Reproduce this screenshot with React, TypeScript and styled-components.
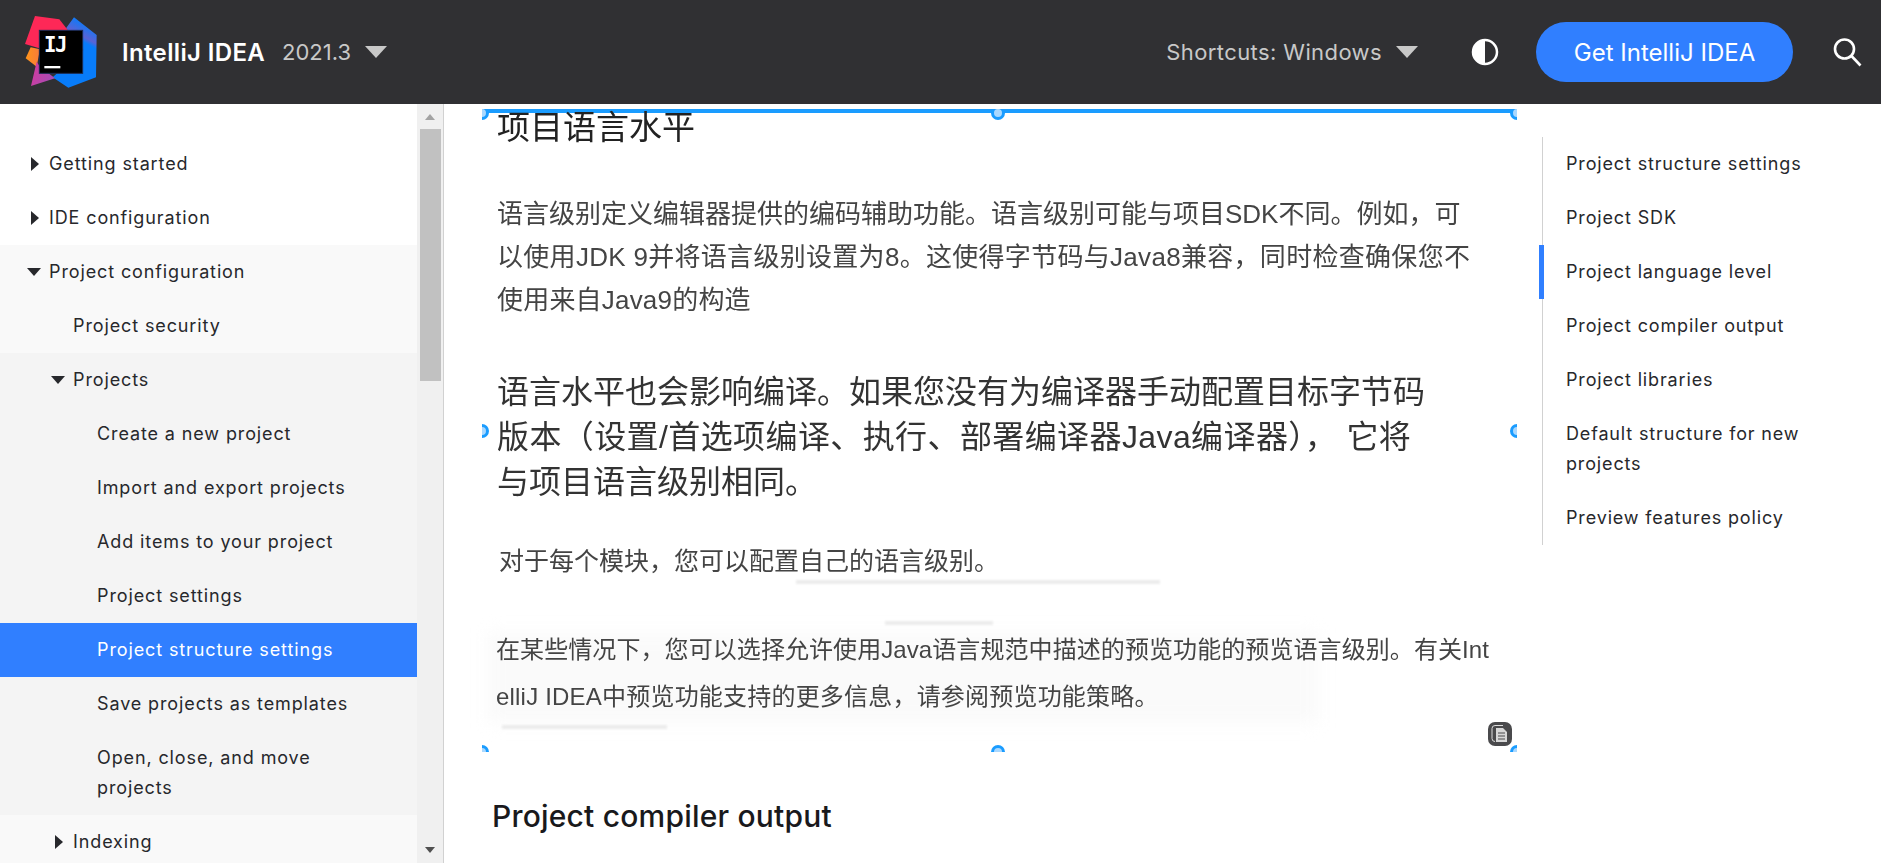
import styled, { createGlobalStyle } from 'styled-components'

const GlobalStyle = createGlobalStyle`
  html, body {
    margin: 0;
    height: 100%;
    overflow: hidden;
    background: #fff;
  }
  * { box-sizing: border-box; }
`

const sansStack = `Inter, "Noto Sans", sans-serif`
const cjkStack = `"Liberation Sans", "Noto Sans CJK SC", sans-serif`

const Page = styled.div`
  height: 100vh;
  display: flex;
  flex-direction: column;
  font-family: ${sansStack};
  color: #27282c;
`

const Header = styled.header`
  flex: 0 0 104px;
  display: flex;
  align-items: center;
  padding: 0 19px 0 24px;
  background: #303033;
`

const Brand = styled.span`
  margin-left: 24px;
  font-size: 24px;
  font-weight: 600;
  letter-spacing: 0.35px;
  color: #fff;
`

const Version = styled.span`
  margin-left: 17px;
  font-size: 22px;
  color: #c8c8c8;
`

const HeaderCaret = styled.span<{ $gap: number }>`
  margin-left: ${({ $gap }) => $gap}px;
  width: 0;
  height: 0;
  border-left: 11px solid transparent;
  border-right: 11px solid transparent;
  border-top: 12px solid #c8c8c8;
`

const Spacer = styled.div`
  flex: 1;
`

const Shortcuts = styled.span`
  font-size: 22px;
  letter-spacing: 0.4px;
  color: #c8c8c8;
`

const ContrastIcon = styled.svg`
  margin-left: 53px;
  width: 28px;
  height: 28px;
`

const GetButton = styled.button`
  margin-left: 37px;
  width: 257px;
  height: 60px;
  border: 0;
  border-radius: 30px;
  background: #307fff;
  color: #fff;
  font-family: inherit;
  font-size: 24px;
`

const SearchIcon = styled.svg`
  margin-left: 39px;
  width: 30px;
  height: 30px;
`

const Body = styled.div`
  flex: 1;
  min-height: 0;
  display: flex;
`

const Sidebar = styled.aside`
  flex: 0 0 444px;
  display: flex;
  border-right: 1px solid #d1d1d1;
`

const Nav = styled.nav`
  flex: 1;
  padding-top: 33px;
  overflow: hidden;
`

const Group = styled.div<{ $bg: string }>`
  background: ${({ $bg }) => $bg};
`

const Row = styled.div<{ $depth: number; $active?: boolean }>`
  display: flex;
  padding: 12px 40px 12px ${({ $depth }) => 49 + $depth * 24}px;
  font-size: 18px;
  line-height: 30px;
  letter-spacing: 0.88px;
  background: ${({ $active }) => ($active ? '#307fff' : 'transparent')};
  color: ${({ $active }) => ($active ? '#fff' : '#27282c')};
`

const CaretBox = styled.span`
  flex: 0 0 22px;
  margin-left: -22px;
  display: flex;
  align-items: center;
`

const Caret = styled.span<{ $open?: boolean }>`
  width: 0;
  height: 0;
  ${({ $open }) =>
    $open
      ? `
    border-left: 7px solid transparent;
    border-right: 7px solid transparent;
    border-top: 8px solid #27282c;
  `
      : `
    margin-left: 4px;
    border-top: 7px solid transparent;
    border-bottom: 7px solid transparent;
    border-left: 8px solid #27282c;
  `}
`

const ScrollTrack = styled.div`
  flex: 0 0 26px;
  display: flex;
  flex-direction: column;
  align-items: center;
  background: #f0f0f0;
`

const ScrollArrowUp = styled.span`
  margin-top: 10px;
  width: 0;
  height: 0;
  border-left: 5.5px solid transparent;
  border-right: 5.5px solid transparent;
  border-bottom: 6px solid #a3a3a3;
`

const ScrollThumb = styled.div`
  margin-top: 9px;
  width: 21px;
  height: 252px;
  background: #c1c1c1;
`

const ScrollArrowDown = styled.span`
  margin-top: auto;
  margin-bottom: 10px;
  width: 0;
  height: 0;
  border-left: 5.5px solid transparent;
  border-right: 5.5px solid transparent;
  border-top: 6px solid #505050;
`

const Main = styled.main`
  flex: 1;
  min-width: 0;
  padding: 5px 0 0 38px;
  overflow: hidden;
`

const PastedBlock = styled.section`
  position: relative;
  width: 1035px;
  height: 643px;
  padding-left: 15px;
  border-top: 4px solid #1a9cff;
  font-family: ${cjkStack};
`

const HandleLayer = styled.div`
  position: absolute;
  inset: -4px 0 0 0;
  overflow: hidden;
  pointer-events: none;
`

const BlockTitle = styled.h3`
  margin: 0;
  font-size: 33px;
  font-weight: 400;
  line-height: 30px;
  color: #222;
  filter: blur(0.4px);
`

const BlockText = styled.div<{ $size: number; $line: number; $top: number; $shift?: number; $color: string }>`
  margin: ${({ $top }) => $top}px 0 0 ${({ $shift }) => $shift ?? 0}px;
  font-size: ${({ $size }) => $size}px;
  line-height: ${({ $line }) => $line}px;
  color: ${({ $color }) => $color};
  white-space: nowrap;
  filter: blur(0.5px);
`

const BlockLine = styled.div<{ $track?: number }>`
  letter-spacing: ${({ $track }) => $track ?? 0}px;
`

const PictureShade = styled.div`
  position: absolute;
  left: 6px;
  top: 520px;
  width: 830px;
  height: 90px;
  background: #fafafa;
  filter: blur(8px);
`

const Handle = styled.span<{ $x: string; $y: string }>`
  position: absolute;
  left: ${({ $x }) => $x};
  top: ${({ $y }) => $y};
  width: 14px;
  height: 14px;
  margin: -7px 0 0 -7px;
  border: 3px solid #1a9cff;
  border-radius: 50%;
  background: #a9d8ff;
`

const Smudge = styled.span<{ $x: number; $y: number; $w: number }>`
  position: absolute;
  left: ${({ $x }) => $x}px;
  top: ${({ $y }) => $y}px;
  width: ${({ $w }) => $w}px;
  height: 4px;
  background: #ececec;
  filter: blur(1px);
`

const CopyBadge = styled.svg`
  position: absolute;
  left: 1006px;
  top: 609px;
  width: 24px;
  height: 24px;
`

const SectionTitle = styled.h2`
  margin: 46px 0 0 10px;
  font-size: 30px;
  font-weight: 500;
  line-height: 36px;
  letter-spacing: 0.2px;
  color: #19191c;
`

const Toc = styled.aside`
  flex: 0 0 342px;
  padding-top: 33px;
`

const TocList = styled.div`
  margin-left: 3px;
  border-left: 1px solid #d1d1d1;
`

const TocItem = styled.div<{ $active?: boolean }>`
  margin-left: -4px;
  padding: 12px 40px 12px 22px;
  border-left: 5px solid ${({ $active }) => ($active ? '#307fff' : 'transparent')};
  font-size: 18px;
  line-height: 30px;
  letter-spacing: 0.85px;
  color: #27282c;
`

const Logo = () => (
  <svg width="74" height="74" viewBox="72 45 222 222">
    <defs>
      <linearGradient id="logoOrange" x1="0" y1="0" x2="1" y2="0">
        <stop offset="0" stopColor="#ff9419" />
        <stop offset="1" stopColor="#f97a3c" />
      </linearGradient>
      <linearGradient id="logoMagenta" x1="0" y1="0" x2="1" y2="0.4">
        <stop offset="0" stopColor="#d6399a" />
        <stop offset="1" stopColor="#a84bb5" />
      </linearGradient>
      <linearGradient id="logoBlue" x1="0.7" y1="0.05" x2="0.55" y2="0.5">
        <stop offset="0" stopColor="#087cfa" />
        <stop offset="0.45" stopColor="#5a63d6" />
        <stop offset="0.6" stopColor="#087cfa" />
      </linearGradient>
    </defs>
    <polygon points="92,142 77,175 110,200 120,148" fill="url(#logoOrange)" />
    <polygon points="222,52 290,105 288,232 205,263 158,232 250,150 198,85" fill="url(#logoBlue)" />
    <polygon points="110,185 93,258 165,235 120,200" fill="url(#logoMagenta)" />
    <polygon points="105,48 178,58 205,92 118,145 75,132" fill="#fe2857" />
    <rect x="118" y="91" width="130" height="129" fill="#000" stroke="#1b2a52" strokeWidth="3" />
    <text x="132" y="155" fontFamily="DejaVu Sans Mono, monospace" fontWeight="700" fontSize="62" fill="#fff" textLength="70">
      IJ
    </text>
    <rect x="133" y="198" width="48" height="7" fill="#fff" />
  </svg>
)

const navTop = ['Getting started', 'IDE configuration']

const projectChildren = [
  'Create a new project',
  'Import and export projects',
  'Add items to your project',
  'Project settings',
]

const tocItems = [
  'Project structure settings',
  'Project SDK',
  'Project language level',
  'Project compiler output',
  'Project libraries',
  'Default structure for new projects',
  'Preview features policy',
]

const App = () => {
  return (
    <Page>
      <GlobalStyle />
      <Header>
        <Logo />
        <Brand>IntelliJ IDEA</Brand>
        <Version>2021.3</Version>
        <HeaderCaret $gap={14} />
        <Spacer />
        <Shortcuts>Shortcuts: Windows</Shortcuts>
        <HeaderCaret $gap={14} />
        <ContrastIcon viewBox="0 0 28 28">
          <circle cx="14" cy="14" r="12" fill="#303033" stroke="#fff" strokeWidth="2.5" />
          <path d="M14 2a12 12 0 0 0 0 24z" fill="#fff" />
        </ContrastIcon>
        <GetButton>Get IntelliJ IDEA</GetButton>
        <SearchIcon viewBox="0 0 30 30" fill="none" stroke="#fff" strokeWidth="2.6">
          <circle cx="12.5" cy="12" r="9.5" />
          <path d="M19.5 19l9 9.5" />
        </SearchIcon>
      </Header>
      <Body>
        <Sidebar>
          <Nav>
            {navTop.map((label) => (
              <Row key={label} $depth={0}>
                <CaretBox>
                  <Caret />
                </CaretBox>
                {label}
              </Row>
            ))}
            <Group $bg="#f9f9f9">
              <Row $depth={0}>
                <CaretBox>
                  <Caret $open />
                </CaretBox>
                Project configuration
              </Row>
              <Row $depth={1}>Project security</Row>
              <Group $bg="#f4f4f4">
                <Row $depth={1}>
                  <CaretBox>
                    <Caret $open />
                  </CaretBox>
                  Projects
                </Row>
                {projectChildren.map((label) => (
                  <Row key={label} $depth={2}>
                    {label}
                  </Row>
                ))}
                <Row $depth={2} $active>
                  Project structure settings
                </Row>
                <Row $depth={2}>Save projects as templates</Row>
                <Row $depth={2}>Open, close, and move projects</Row>
              </Group>
              <Row $depth={1}>
                <CaretBox>
                  <Caret />
                </CaretBox>
                Indexing
              </Row>
            </Group>
          </Nav>
          <ScrollTrack>
            <ScrollArrowUp />
            <ScrollThumb />
            <ScrollArrowDown />
          </ScrollTrack>
        </Sidebar>
        <Main>
          <PastedBlock>
            <PictureShade />
            <BlockTitle>项目语言水平</BlockTitle>
            <BlockText $size={26} $line={43} $top={50} $color="#444">
              <BlockLine>语言级别定义编辑器提供的编码辅助功能。语言级别可能与项目SDK不同。例如，可</BlockLine>
              <BlockLine $track={0.3}>以使用JDK 9并将语言级别设置为8。这使得字节码与Java8兼容，同时检查确保您不</BlockLine>
              <BlockLine $track={0.2}>使用来自Java9的构造</BlockLine>
            </BlockText>
            <BlockText $size={32} $line={45} $top={48} $color="#333">
              <BlockLine>语言水平也会影响编译。如果您没有为编译器手动配置目标字节码</BlockLine>
              <BlockLine $track={0.4}>版本（设置/首选项编译、执行、部署编译器Java编译器）， 它将</BlockLine>
              <BlockLine>与项目语言级别相同。</BlockLine>
            </BlockText>
            <BlockText $size={25} $line={36} $top={38} $shift={2} $color="#444">
              <BlockLine>对于每个模块，您可以配置自己的语言级别。</BlockLine>
            </BlockText>
            <BlockText $size={24} $line={47} $top={47} $shift={-1} $color="#444">
              <BlockLine $track={0.08}>在某些情况下，您可以选择允许使用Java语言规范中描述的预览功能的预览语言级别。有关Int</BlockLine>
              <BlockLine $track={0.2}>elliJ IDEA中预览功能支持的更多信息，请参阅预览功能策略。</BlockLine>
            </BlockText>
            <Smudge $x={314} $y={467} $w={364} />
            <Smudge $x={403} $y={508} $w={108} />
            <Smudge $x={20} $y={612} $w={165} />
            <CopyBadge viewBox="0 0 24 24">
              <rect width="24" height="24" rx="7" fill="#4a4a4c" />
              <path d="M7 19.5a3 3 0 0 1-3-3v-10a3 3 0 0 1 3-3h8" fill="none" stroke="#ddd" strokeWidth="1" />
              <path d="M8 6h7l4 4v10H8z" fill="#d8d8d8" />
              <path d="M10 11h7M10 14h7M10 17h7" stroke="#4a4a4c" strokeWidth="1.2" />
            </CopyBadge>
            <HandleLayer>
              <Handle $x="0" $y="4px" />
              <Handle $x="calc(50% - 2px)" $y="4px" />
              <Handle $x="100%" $y="4px" />
              <Handle $x="0" $y="50%" />
              <Handle $x="100%" $y="50%" />
              <Handle $x="0" $y="100%" />
              <Handle $x="calc(50% - 2px)" $y="100%" />
              <Handle $x="100%" $y="100%" />
            </HandleLayer>
          </PastedBlock>
          <SectionTitle>Project compiler output</SectionTitle>
        </Main>
        <Toc>
          <TocList>
            {tocItems.map((label) => (
              <TocItem key={label} $active={label === 'Project language level'}>
                {label}
              </TocItem>
            ))}
          </TocList>
        </Toc>
      </Body>
    </Page>
  )
}

export default App
